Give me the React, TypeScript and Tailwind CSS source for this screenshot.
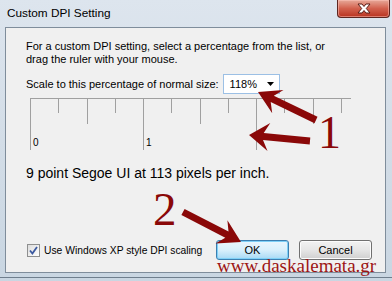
import React from "react";

type P = [number, number];

function arrowPoints(tail: P, tip: P, w: number, L: number, H: number): string {
  const dx = tip[0] - tail[0];
  const dy = tip[1] - tail[1];
  const len = Math.hypot(dx, dy);
  const ux = dx / len;
  const uy = dy / len;
  const nx = -uy;
  const ny = ux;
  const B: P = [tip[0] - ux * L, tip[1] - uy * L];
  const N: P = [tip[0] - ux * L * 0.72, tip[1] - uy * L * 0.72];
  const pts: P[] = [
    [tail[0] + (nx * w) / 2, tail[1] + (ny * w) / 2],
    [N[0] + (nx * w) / 2, N[1] + (ny * w) / 2],
    [B[0] + nx * H, B[1] + ny * H],
    tip,
    [B[0] - nx * H, B[1] - ny * H],
    [N[0] - (nx * w) / 2, N[1] - (ny * w) / 2],
    [tail[0] - (nx * w) / 2, tail[1] - (ny * w) / 2],
  ];
  return pts.map((p) => `${p[0].toFixed(1)},${p[1].toFixed(1)}`).join(" ");
}

const ui = { fontFamily: '"Liberation Sans", Arial, sans-serif' };
const serif = { fontFamily: '"Liberation Serif", "Times New Roman", serif' };

function Ruler() {
  const ticks: { x: number; h: number }[] = [];
  for (let i = 0; i < 12; i++) {
    const x = i * 28.25;
    const h = i % 4 === 0 ? 52 : i % 2 === 0 ? 26 : 15;
    ticks.push({ x, h });
  }
  return (
    <div className="relative ml-[4px] mt-[4px] h-[52px] w-[321px]">
      <svg className="absolute inset-0" width="321" height="52">
        <line x1="0" y1="0.5" x2="321" y2="0.5" stroke="#a0a0a0" strokeWidth="1" />
        {ticks.map((t, i) => (
          <line
            key={i}
            x1={Math.round(t.x) + 0.5}
            y1="0"
            x2={Math.round(t.x) + 0.5}
            y2={t.h}
            stroke="#a0a0a0"
            strokeWidth="1"
          />
        ))}
      </svg>
      <span className="absolute left-[3px] top-[38px] text-[10px] leading-[13px] text-black">0</span>
      <span className="absolute left-[116px] top-[38px] text-[10px] leading-[13px] text-black">1</span>
    </div>
  );
}

export default function App() {
  return (
    <div
      className="relative flex h-[281px] w-[392px] flex-col overflow-hidden bg-gradient-to-b from-[#dde5ee] via-[#d3dde7] to-[#c9d6e2]"
      style={ui}
    >
      {/* title bar */}
      <div className="flex h-[27px] items-start justify-between">
        <div className="pl-[7px] pt-[6px] text-[11.8px] leading-[15px] text-black">Custom DPI Setting</div>
        <div className="mr-[2px] flex h-[18px] w-[53px] items-center justify-center rounded-b-[4px] border border-t-0 border-[#5d2620] bg-gradient-to-b from-[#e6a899] via-[#d2604d] to-[#b8321f] shadow-[inset_0_0_0_1px_rgba(255,200,190,0.5)]">
          <svg width="14" height="11" viewBox="0 0 14 11">
            <path
              d="M1 1 H5 L7 3.5 L9 1 H13 L9.3 5.5 L13 10 H9 L7 7.5 L5 10 H1 L4.7 5.5 Z"
              fill="#ffffff"
              stroke="#5a1d16"
              strokeWidth="1"
              strokeLinejoin="round"
            />
          </svg>
        </div>
      </div>

      {/* client area */}
      <div className="ml-[5px] mr-[6px] flex h-[246px] flex-col border border-[#7f8d9b] bg-[#f0f0f0] pl-[20px] pr-[13px] pt-[12px]">
        <p className="text-[11px] leading-[13px] text-black">
          For a custom DPI setting, select a percentage from the list, or
          <br />
          drag the ruler with your mouse.
        </p>
        <div className="mt-[8px] flex h-[20px] items-center">
          <span className="text-[11px] leading-[13px] text-black">Scale to this percentage of normal size:</span>
          <div className="ml-[4px] flex h-[20px] w-[57px] items-center justify-between border border-[#9cc0e5] bg-white pl-[6px] pr-[5px]">
            <span className="text-[11px] leading-[13px] text-black">118%</span>
            <svg width="7" height="4" viewBox="0 0 7 4">
              <path d="M0 0 H7 L3.5 4 Z" fill="#000" />
            </svg>
          </div>
        </div>
        <Ruler />
        <div className="mt-[15px] text-[14px] leading-[16px] text-black">9 point Segoe UI at 113 pixels per inch.</div>

        <div className="mb-[12px] mt-auto flex h-[20px] items-center justify-between">
          <div className="ml-[1px] flex items-center">
            <div className="flex h-[13px] w-[13px] items-center justify-center border border-[#8e8f8f] bg-gradient-to-br from-[#dcdcdc] to-[#ffffff]">
              <svg width="9" height="9" viewBox="0 0 9 9">
                <path d="M1 4.5 L3.4 7.5 L8 1" fill="none" stroke="#3b59a0" strokeWidth="1.8" />
              </svg>
            </div>
            <span className="ml-[4px] text-[10.3px] leading-[13px] text-black">Use Windows XP style DPI scaling</span>
          </div>
          <div className="flex gap-[10px]">
            <div className="flex h-[20px] w-[73px] items-center justify-center rounded-[3px] border border-[#3c7fb1] bg-gradient-to-b from-[#eaf6fd] via-[#d9f0fc] to-[#a7d9f5] shadow-[inset_0_0_0_1px_#7fd0f7] text-[11px] leading-[13px] text-black">
              OK
            </div>
            <div className="flex h-[20px] w-[73px] items-center justify-center rounded-[3px] border border-[#707070] bg-gradient-to-b from-[#f2f2f2] via-[#e6e6e6] to-[#cfcfcf] shadow-[inset_0_0_0_1px_#fcfcfc] text-[11px] leading-[13px] text-black">
              Cancel
            </div>
          </div>
        </div>
      </div>

      {/* bottom frame */}
      <div className="mt-[4px] h-[1px] w-full bg-[#6f7e8d]" />

      {/* annotations */}
      <svg className="pointer-events-none absolute inset-0" width="392" height="281">
        <polygon points={arrowPoints([316, 120], [258, 92], 7, 22, 13)} fill="#8a0808" />
        <polygon points={arrowPoints([310, 141], [249, 135], 7, 20, 14)} fill="#8a0808" />
        <polygon points={arrowPoints([183, 212], [241, 242], 7, 22, 13)} fill="#8a0808" />
      </svg>
      <span className="pointer-events-none absolute left-[318px] top-[110px] text-[46px] leading-[46px] text-[#8a0808]" style={serif}>
        1
      </span>
      <span className="pointer-events-none absolute left-[153px] top-[186px] text-[47px] leading-[47px] text-[#8a0808]" style={serif}>
        2
      </span>
      <span className="pointer-events-none absolute left-[217px] top-[256px] text-[19px] leading-[19px] text-[#9c1414]" style={serif}>
        www.daskalemata.gr
      </span>
    </div>
  );
}
